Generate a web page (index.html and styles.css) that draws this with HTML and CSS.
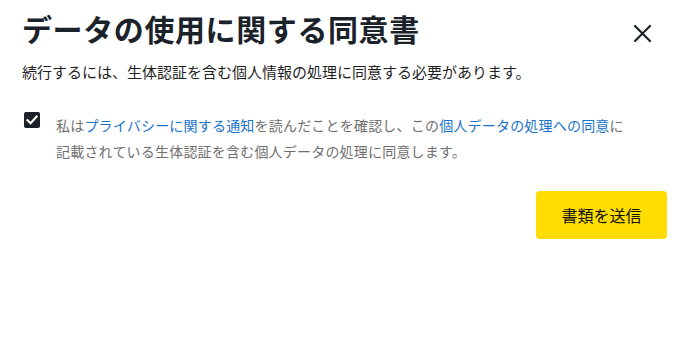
FILE: index.html
```html
<!DOCTYPE html>
<html lang="ja">
<head>
<meta charset="utf-8">
<link rel="stylesheet" href="styles.css">
</head>
<body>
<div class="dialog">
  <div class="header">
    <h1 class="title">データの使用に関する同意書</h1>
    <button class="close" aria-label="閉じる">
      <svg width="17" height="17" viewBox="0 0 17 17"><path d="M1 1L16 16M16 1L1 16" stroke="#1b2229" stroke-width="2.2" stroke-linecap="round" fill="none"/></svg>
    </button>
  </div>
  <p class="subtitle">続行するには、生体認証を含む個人情報の処理に同意する必要があります。</p>
  <label class="consent">
    <span class="checkbox">
      <svg width="16" height="16" viewBox="0 0 16 16"><path d="M3.5 8.2L6.6 11.2L12.6 4.6" stroke="#fff" stroke-width="2.2" fill="none" stroke-linecap="square"/></svg>
    </span>
    <span class="consent-text">私は<a class="link">プライバシーに関する通知</a>を読んだことを確認し、この<a class="link">個人データの処理への同意</a>に記載されている生体認証を含む個人データの処理に同意します。</span>
  </label>
  <div class="actions">
    <button class="submit">書類を送信</button>
  </div>
</div>
</body>
</html>
```
FILE: styles.css
```css
html, body {
  margin: 0;
  padding: 0;
  background: #fff;
}
body {
  font-family: "Noto Sans CJK JP", "Noto Sans", sans-serif;
}
.dialog {
  width: 694px;
  padding: 6px 27px 0 22px;
  box-sizing: border-box;
}
.header {
  display: flex;
  justify-content: space-between;
  align-items: flex-start;
}
.title {
  margin: 0;
  font-size: 30px;
  font-weight: 700;
  line-height: 44px;
  letter-spacing: 0.6px;
  color: #1b2229;
}
.close {
  border: 0;
  background: none;
  padding: 0;
  margin: 19px 16px 0 0;
  width: 17px;
  height: 17px;
  display: flex;
}
.subtitle {
  margin: 11px 0 0;
  font-size: 15px;
  line-height: 22px;
  color: #1f1f1f;
}
.consent {
  display: flex;
  align-items: flex-start;
  margin-top: 26px;
}
.checkbox {
  flex: none;
  width: 16px;
  height: 16px;
  margin: 3px 0 0 2px;
  background: #1b2229;
  border-radius: 2px;
  display: flex;
}
.consent-text {
  margin-left: 16px;
  margin-top: 3px;
  width: 578px;
  font-size: 14px;
  line-height: 26px;
  letter-spacing: 0.2px;
  color: #6f6f6f;
}
.link {
  color: #1a73c9;
  text-decoration: none;
}
.actions {
  display: flex;
  justify-content: flex-end;
  margin-top: 27px;
}
.submit {
  width: 131px;
  height: 48px;
  border: 0;
  border-radius: 4px;
  background: #ffdd00;
  color: #111;
  font-family: "Noto Sans CJK JP", sans-serif;
  font-size: 16px;
}
```
